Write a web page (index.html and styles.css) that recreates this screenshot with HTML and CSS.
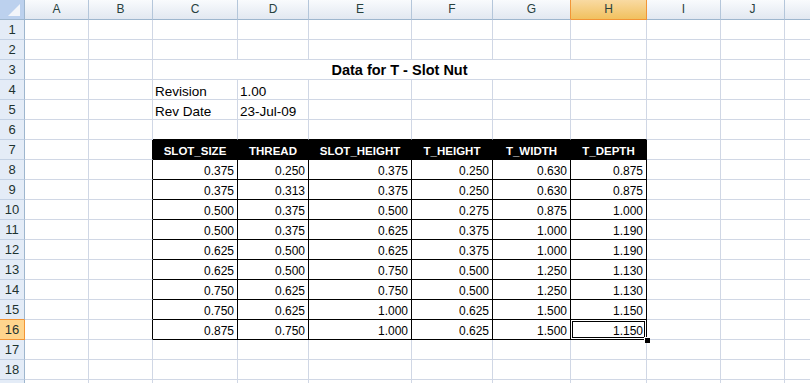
FILE: index.html
```html
<!DOCTYPE html>
<html>
	<head>
		<meta charset="utf-8">
		<title>Data for T - Slot Nut</title>
		<link rel="stylesheet" href="styles.css">
	</head>
	<body>
		<table class="sheet">
			<tr class="colHead">
				<th class="corner"><svg width="24" height="19" viewBox="0 0 24 19"><polygon points="20,4 20,16 8,16" fill="#F2F5FA"/></svg></th>
				<th class="wA">A</th>
				<th class="wB">B</th>
				<th class="wC">C</th>
				<th class="wD">D</th>
				<th class="wE">E</th>
				<th class="wF">F</th>
				<th class="wG preSel">G</th>
				<th class="wH sel">H</th>
				<th class="wI">I</th>
				<th class="wJ">J</th>
				<th class="wK"></th>
			</tr>
			<tr><th class="rowHead">1</th><td></td><td></td><td></td><td></td><td></td><td></td><td></td><td></td><td></td><td></td><td></td></tr>
			<tr><th class="rowHead">2</th><td></td><td></td><td></td><td></td><td></td><td></td><td></td><td></td><td></td><td></td><td></td></tr>
			<tr>
				<th class="rowHead">3</th><td></td><td></td>
				<td colspan="6" class="title">Data for T - Slot Nut</td>
				<td></td><td></td><td></td>
			</tr>
			<tr>
				<th class="rowHead">4</th><td></td><td></td>
				<td class="lbl">Revision</td><td class="lbl">1.00</td>
				<td></td><td></td><td></td><td></td><td></td><td></td><td></td>
			</tr>
			<tr>
				<th class="rowHead">5</th><td></td><td></td>
				<td class="lbl">Rev Date</td><td class="lbl">23-Jul-09</td>
				<td></td><td></td><td></td><td></td><td></td><td></td><td></td>
			</tr>
			<tr>
				<th class="rowHead">6</th><td></td><td></td>
				<td class="above"></td><td class="above"></td><td class="above"></td><td class="above"></td><td class="above"></td><td class="above"></td>
				<td></td><td></td><td></td>
			</tr>
			<tr>
				<th class="rowHead">7</th><td></td><td class="left"></td>
				<td class="colName">SLOT_SIZE</td>
				<td class="colName">THREAD</td>
				<td class="colName">SLOT_HEIGHT</td>
				<td class="colName">T_HEIGHT</td>
				<td class="colName">T_WIDTH</td>
				<td class="colName">T_DEPTH</td>
				<td></td><td></td><td></td>
			</tr>
			<tr>
				<th class="rowHead">8</th><td></td><td class="left"></td>
				<td class="num">0.375</td><td class="num">0.250</td><td class="num">0.375</td><td class="num">0.250</td><td class="num">0.630</td><td class="num">0.875</td>
				<td></td><td></td><td></td>
			</tr>
			<tr>
				<th class="rowHead">9</th><td></td><td class="left"></td>
				<td class="num">0.375</td><td class="num">0.313</td><td class="num">0.375</td><td class="num">0.250</td><td class="num">0.630</td><td class="num">0.875</td>
				<td></td><td></td><td></td>
			</tr>
			<tr>
				<th class="rowHead">10</th><td></td><td class="left"></td>
				<td class="num">0.500</td><td class="num">0.375</td><td class="num">0.500</td><td class="num">0.275</td><td class="num">0.875</td><td class="num">1.000</td>
				<td></td><td></td><td></td>
			</tr>
			<tr>
				<th class="rowHead">11</th><td></td><td class="left"></td>
				<td class="num">0.500</td><td class="num">0.375</td><td class="num">0.625</td><td class="num">0.375</td><td class="num">1.000</td><td class="num">1.190</td>
				<td></td><td></td><td></td>
			</tr>
			<tr>
				<th class="rowHead">12</th><td></td><td class="left"></td>
				<td class="num">0.625</td><td class="num">0.500</td><td class="num">0.625</td><td class="num">0.375</td><td class="num">1.000</td><td class="num">1.190</td>
				<td></td><td></td><td></td>
			</tr>
			<tr>
				<th class="rowHead">13</th><td></td><td class="left"></td>
				<td class="num">0.625</td><td class="num">0.500</td><td class="num">0.750</td><td class="num">0.500</td><td class="num">1.250</td><td class="num">1.130</td>
				<td></td><td></td><td></td>
			</tr>
			<tr>
				<th class="rowHead">14</th><td></td><td class="left"></td>
				<td class="num">0.750</td><td class="num">0.625</td><td class="num">0.750</td><td class="num">0.500</td><td class="num">1.250</td><td class="num">1.130</td>
				<td></td><td></td><td></td>
			</tr>
			<tr>
				<th class="rowHead preSel">15</th><td></td><td class="left"></td>
				<td class="num">0.750</td><td class="num">0.625</td><td class="num">1.000</td><td class="num">0.625</td><td class="num">1.500</td><td class="num">1.150</td>
				<td></td><td></td><td></td>
			</tr>
			<tr>
				<th class="rowHead sel">16</th><td></td><td class="left"></td>
				<td class="num">0.875</td><td class="num">0.750</td><td class="num">1.000</td><td class="num">0.625</td><td class="num">1.500</td>
				<td class="num active">1.150<span class="selBox"></span><span class="handle"></span></td>
				<td></td><td></td><td></td>
			</tr>
			<tr><th class="rowHead">17</th><td></td><td></td><td></td><td></td><td></td><td></td><td></td><td></td><td></td><td></td><td></td></tr>
			<tr><th class="rowHead">18</th><td></td><td></td><td></td><td></td><td></td><td></td><td></td><td></td><td></td><td></td><td></td></tr>
			<tr><th class="rowHead"></th><td></td><td></td><td></td><td></td><td></td><td></td><td></td><td></td><td></td><td></td><td></td></tr>
		</table>
	</body>
</html>
```

FILE: styles.css
```css
body {
	margin: 0;
	overflow: hidden;
	background: white;
	font-family: "Liberation Sans", Arial, sans-serif;
	color: black;
}
.sheet {
	border-collapse: separate;
	border-spacing: 0;
	table-layout: fixed;
	width: 849px;
}
.sheet th,
.sheet td {
	box-sizing: border-box;
	height: 20px;
	padding: 0 2px;
	border-right: 1px solid #D0D7E5;
	border-bottom: 1px solid #D0D7E5;
	white-space: nowrap;
	overflow: hidden;
	vertical-align: bottom;
	line-height: 15px;
	font-weight: normal;
}

/* column letters */
.colHead th {
	background: linear-gradient(#F9FBFD, #E2E8F1);
	border-right-color: #B4C6DA;
	border-bottom-color: #9EB6CE;
	color: #27413E;
	font-size: 12px;
	text-align: center;
	vertical-align: middle;
}
.colHead th.corner {
	width: 25px;
	padding: 0;
	background: #BCD1EE;
	border-right-color: #9EB6CE;
}
.corner svg {
	display: block;
}
.wA, .wB, .wJ, .wK { width: 64px; }
.wC { width: 85px; }
.wD { width: 71px; }
.wE { width: 103px; }
.wF { width: 81px; }
.wG { width: 78px; }
.wH { width: 76px; }
.wI { width: 74px; }
.colHead th.preSel {
	border-right-color: #F29536;
}
.colHead th.sel {
	background: linear-gradient(#F9DAA2, #F1C15F);
	border-right-color: #F29536;
	border-bottom-color: #F29536;
}

/* row numbers */
.sheet th.rowHead {
	background: #E4ECF7;
	border-right-color: #9EB6CE;
	border-bottom-color: #C3D1E4;
	color: #1E3330;
	font-size: 13px;
	text-align: center;
	vertical-align: middle;
	padding: 0;
}
.sheet th.rowHead.preSel {
	border-bottom-color: #F29536;
}
.sheet th.rowHead.sel {
	background: #FFD58D;
	border-right-color: #F29536;
	border-bottom-color: #F29536;
}

/* cells */
.sheet td.title {
	text-align: center;
	font-weight: bold;
	font-size: 14.5px;
	padding-bottom: 1px;
}
.lbl {
	font-size: 13.5px;
}
.sheet td.above {
	border-bottom-color: black;
}
.sheet td.left {
	border-right-color: black;
}
.sheet td.colName {
	background: black;
	color: white;
	font-weight: bold;
	font-size: 11.5px;
	text-align: center;
	border-right-color: black;
	border-bottom-color: black;
}
.sheet td.num {
	font-size: 12px;
	text-align: right;
	padding-right: 3px;
	border-right-color: black;
	border-bottom-color: black;
}
.sheet td.active {
	position: relative;
	overflow: visible;
}
.selBox {
	position: absolute;
	left: -1px;
	top: -1px;
	right: -1px;
	bottom: -1px;
	border: 1px solid black;
	box-shadow: inset 0 0 0 1px white, inset 0 0 0 2px black;
}
.handle {
	position: absolute;
	right: -4px;
	bottom: -4px;
	width: 5px;
	height: 5px;
	background: black;
	border: 1px solid white;
	border-right: 0;
	border-bottom: 0;
}
```
